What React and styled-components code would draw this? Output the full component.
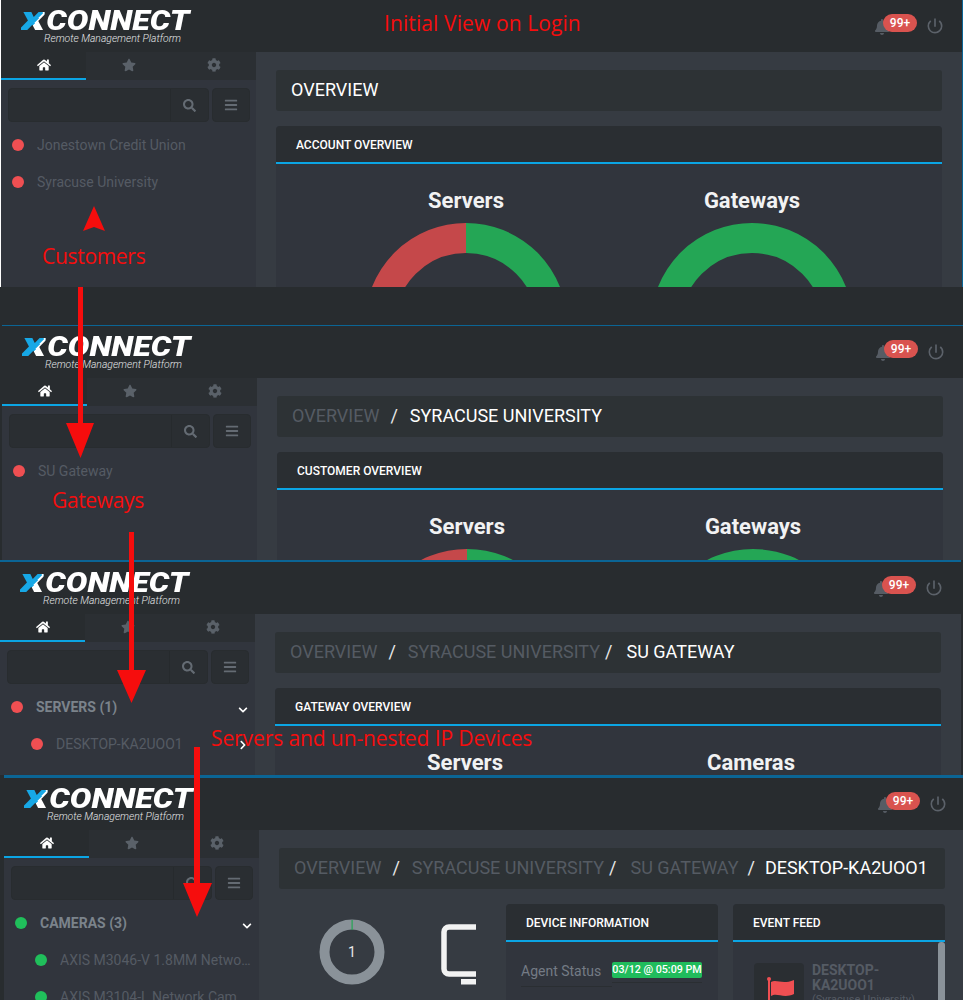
import React from "react";
import styled, { createGlobalStyle } from "styled-components";
import {
  FaHome,
  FaStar,
  FaCog,
  FaSearch,
  FaBars,
  FaBell,
  FaChevronDown,
  FaChevronRight,
} from "react-icons/fa";
import { MdPowerSettingsNew } from "react-icons/md";

const GlobalStyle = createGlobalStyle`
  html, body { margin: 0; padding: 0; background: #282c2f; }
  body { font-family: Roboto, "Liberation Sans", sans-serif; }
`;

const Page = styled.div`
  position: relative;
  width: 963px;
  height: 1000px;
  overflow: hidden;
  background: #282c2f;
`;

const Snapshot = styled.section`
  box-sizing: border-box;
  width: ${(p) => p.$width}px;
  height: ${(p) => p.$height}px;
  margin-left: ${(p) => p.$left}px;
  border-top: ${(p) => p.$line}px solid #0b6595;
  ${(p) => p.$framed && "border-left: 1px solid #fff; border-right: 1px solid #0b6595;"}
  overflow: hidden;
  display: flex;
  flex-direction: column;
  background: #363b42;
`;

const Band = styled.div`
  height: 38px;
  background: #282c2f;
`;

const Header = styled.header`
  flex: none;
  height: 52px;
  display: flex;
  align-items: center;
  justify-content: space-between;
  padding: 0 17px 0 20px;
  background: #282c2f;
`;

const Logo = styled.div`
  display: flex;
  flex-direction: column;
  align-items: flex-end;
  width: 168px;
  margin-top: -1px;
`;

const LogoMark = styled.div`
  font: italic 900 28px/24px Roboto, "Liberation Sans", sans-serif;
  color: #fff;
  white-space: nowrap;
`;

const LogoX = styled.span`
  display: inline-block;
  margin-right: 19px;
  font-size: 33px;
  transform: scaleX(1.5);
  transform-origin: right center;
  background: linear-gradient(118deg, #17a8e6 62%, #fff 62%);
  -webkit-background-clip: text;
  background-clip: text;
  color: transparent;
`;

const LogoWord = styled.span`
  display: inline-block;
  transform: scaleX(1.15);
  transform-origin: right center;
`;

const LogoSub = styled.div`
  margin: 0 8px 0 0;
  font: italic 300 10.4px/12px Roboto, "Liberation Sans", sans-serif;
  color: #e4e6e8;
  white-space: nowrap;
`;

const HeaderActions = styled.div`
  display: flex;
  align-items: center;
`;

const BellWrap = styled.div`
  position: relative;
  width: 44px;
  height: 20px;
  margin-right: 7px;
  color: #565c64;
  font-size: 16px;
  svg {
    position: absolute;
    left: 0;
    top: 3px;
  }
`;

const Badge = styled.span`
  position: absolute;
  left: 9px;
  top: -2px;
  width: 34px;
  height: 18px;
  border-radius: 9px;
  background: #d9534f;
  color: #fff;
  font: 500 12px/18px Roboto, sans-serif;
  text-align: center;
`;

const Power = styled(MdPowerSettingsNew)`
  color: #5c626a;
  font-size: 20px;
`;

const Body = styled.div`
  flex: 1;
  min-height: 0;
  display: flex;
`;

const Sidebar = styled.aside`
  flex: none;
  width: 255px;
  background: #31353d;
`;

const Tabs = styled.div`
  display: grid;
  grid-template-columns: repeat(3, 1fr);
  height: 28px;
  background: #2b2f33;
`;

const Tab = styled.div`
  box-sizing: border-box;
  display: flex;
  align-items: flex-start;
  justify-content: center;
  padding-top: 6px;
  font-size: 14px;
  color: ${(p) => (p.$active ? "#fff" : "#5a6169")};
  background: ${(p) => (p.$active ? "#282c2f" : "transparent")};
  border-bottom: 2px solid ${(p) => (p.$active ? "#0ba5e4" : "transparent")};
`;

const SearchRow = styled.div`
  display: flex;
  gap: 3px;
  padding: 8px 6px 4px 7px;
`;

const SearchBox = styled.div`
  flex: 1;
  height: 34px;
  box-sizing: border-box;
  display: flex;
  justify-content: flex-end;
  background: #2a2e32;
  border: 1px solid #282c2f;
  border-radius: 4px;
`;

const SearchButton = styled.div`
  width: 37px;
  display: flex;
  align-items: center;
  justify-content: center;
  border-left: 1px solid #262a2d;
  color: #646b73;
  font-size: 13px;
`;

const MenuButton = styled.div`
  width: 38px;
  height: 34px;
  box-sizing: border-box;
  display: flex;
  align-items: center;
  justify-content: center;
  background: #2a2e32;
  border: 1px solid #282c2f;
  border-radius: 4px;
  color: #646b73;
  font-size: 14px;
`;

const TreeRow = styled.div`
  display: flex;
  align-items: center;
  height: 37px;
  padding-left: ${(p) => (p.$nested ? 31 : 11)}px;
  padding-right: 7px;
`;

const Dot = styled.span`
  flex: none;
  width: 12px;
  height: 12px;
  margin-right: 13px;
  border-radius: 50%;
  background: ${(p) => (p.$ok ? "#20bf5b" : "#ef4f52")};
`;

const RowLabel = styled.span`
  flex: 1;
  min-width: 0;
  font-size: 14px;
  color: #555b64;
  white-space: nowrap;
  overflow: hidden;
  text-overflow: ellipsis;
`;

const GroupLabel = styled(RowLabel)`
  font-weight: 700;
  color: #7b838b;
`;

const RowChevron = styled.span`
  flex: none;
  margin-top: ${(p) => (p.$down ? 8 : 4)}px;
  color: #fff;
  font-size: 10px;
  line-height: 10px;
`;

const Main = styled.main`
  flex: 1;
  min-width: 0;
  padding: 18px 20px 0;
`;

const Crumbs = styled.nav`
  box-sizing: border-box;
  height: 41px;
  margin-bottom: 15px;
  display: flex;
  align-items: center;
  padding: 0 0 2px 15px;
  background: #2d3235;
  border-radius: 3px;
  font-size: 18px;
  white-space: nowrap;
`;

const CrumbLink = styled.span`
  color: #555b63;
`;

const CrumbSlash = styled.span`
  color: #e8e8e8;
  margin: 0 ${(p) => p.$after}px 0 ${(p) => p.$before}px;
`;

const CrumbCurrent = styled.span`
  color: #fff;
`;

const Panel = styled.div`
  background: #31353d;
  border-radius: 4px 4px 0 0;
`;

const PanelHead = styled.div`
  box-sizing: border-box;
  height: 38px;
  display: flex;
  align-items: center;
  padding: 1px 0 0 20px;
  background: #2a2e32;
  border-bottom: 2px solid #0ba5e4;
  border-radius: 4px 4px 0 0;
  color: #fff;
  font-size: 12px;
  font-weight: 500;
`;

const Charts = styled.div`
  display: grid;
  grid-template-columns: 286px 286px;
  padding: 25px 47px 0;
`;

const ChartCell = styled.div`
  display: flex;
  flex-direction: column;
  align-items: center;
`;

const ChartTitle = styled.h3`
  margin: 0 0 10px;
  font-size: 22px;
  line-height: 24px;
  font-weight: 700;
  color: #f1f2f3;
`;

const DeviceRow = styled.div`
  display: flex;
  align-items: flex-start;
  height: 240px;
  overflow: hidden;
`;

const StatColumn = styled.div`
  flex: none;
  width: 146px;
  padding-top: 15px;
  display: flex;
  justify-content: center;
`;

const Ring = styled.div`
  position: relative;
  width: 66px;
  height: 66px;
`;

const RingValue = styled.span`
  position: absolute;
  inset: 0;
  display: flex;
  align-items: center;
  justify-content: center;
  color: #e8e8e8;
  font-size: 14px;
`;

const DeviceIcon = styled.div`
  flex: none;
  width: 35px;
  margin: 20px 30px 0 16px;
  overflow: hidden;
  line-height: 0;
`;

const SidePanel = styled(Panel)`
  flex: none;
  width: 212px;
  min-height: 240px;
  margin-right: ${(p) => (p.$gap ? 15 : 0)}px;
`;

const InfoRow = styled.div`
  display: flex;
  padding: 20px 16px 0 15px;
`;

const InfoKey = styled.div`
  box-sizing: border-box;
  width: 91px;
  height: 25px;
  border-bottom: 1px solid #2a2e32;
  color: #747b85;
  font-size: 14px;
  line-height: 18px;
`;

const InfoValue = styled.div`
  flex: 1;
  box-sizing: border-box;
  height: 21px;
  border-bottom: 1px solid #2a2e32;
  span {
    display: block;
    height: 16px;
    background: #20bc5c;
    border-radius: 2px;
    color: #fff;
    font-size: 10.7px;
    font-weight: 500;
    line-height: 16px;
    text-align: center;
    white-space: nowrap;
  }
`;

const FeedBody = styled.div`
  position: relative;
  display: flex;
  padding: 21px 0 0 21px;
`;

const ScrollThumb = styled.div`
  position: absolute;
  top: 0;
  right: 0;
  width: 7px;
  height: 60px;
  border-radius: 3px 3px 0 0;
  background: #8a9299;
`;

const FeedTile = styled.div`
  flex: none;
  box-sizing: border-box;
  width: 50px;
  height: 60px;
  margin-right: 8px;
  padding: 14px 0 0 13px;
  background: #2a2e32;
  border-radius: 4px;
`;

const FeedText = styled.div`
  width: 115px;
`;

const FeedTitle = styled.div`
  color: #555b64;
  font-size: 14px;
  font-weight: 700;
  line-height: 15px;
`;

const FeedSub = styled.div`
  color: #555b64;
  font-size: 11px;
  line-height: 14px;
`;

const ArrowLayer = styled.svg`
  position: absolute;
  left: 0;
  top: 0;
  pointer-events: none;
`;

const Note = styled.div`
  position: absolute;
  left: ${(p) => p.$x}px;
  top: ${(p) => p.$y}px;
  color: #f60d0d;
  font: 21px/28px "Open Sans", "Noto Sans", sans-serif;
  letter-spacing: ${(p) => p.$spacing || 0}px;
  white-space: nowrap;
`;

function Donut({ left, right }) {
  return (
    <svg width="202" height="202" viewBox="0 0 202 202">
      <path d="M101 15 A86 86 0 0 0 101 187" fill="none" stroke={left} strokeWidth="30" />
      <path d="M101 15 A86 86 0 0 1 101 187" fill="none" stroke={right} strokeWidth="30" />
    </svg>
  );
}

function TopBar() {
  return (
    <Header>
      <Logo>
        <LogoMark>
          <LogoX>x</LogoX>
          <LogoWord>CONNECT</LogoWord>
        </LogoMark>
        <LogoSub>Remote Management Platform</LogoSub>
      </Logo>
      <HeaderActions>
        <BellWrap>
          <FaBell />
          <Badge>99+</Badge>
        </BellWrap>
        <Power />
      </HeaderActions>
    </Header>
  );
}

function SideNav({ children }) {
  return (
    <Sidebar>
      <Tabs>
        <Tab $active>
          <FaHome />
        </Tab>
        <Tab>
          <FaStar />
        </Tab>
        <Tab>
          <FaCog />
        </Tab>
      </Tabs>
      <SearchRow>
        <SearchBox>
          <SearchButton>
            <FaSearch />
          </SearchButton>
        </SearchBox>
        <MenuButton>
          <FaBars />
        </MenuButton>
      </SearchRow>
      {children}
    </Sidebar>
  );
}

function OverviewPanel({ title, first, second }) {
  return (
    <Panel>
      <PanelHead>{title}</PanelHead>
      <Charts>
        <ChartCell>
          <ChartTitle>{first}</ChartTitle>
          <Donut left="#c5484a" right="#24a655" />
        </ChartCell>
        <ChartCell>
          <ChartTitle>{second}</ChartTitle>
          <Donut left="#24a655" right="#24a655" />
        </ChartCell>
      </Charts>
    </Panel>
  );
}

export default function App() {
  return (
    <Page>
      <GlobalStyle />

      <Snapshot $left={0} $width={963} $height={287} $line={0} $framed>
        <TopBar />
        <Body>
          <SideNav>
            <TreeRow>
              <Dot />
              <RowLabel>Jonestown Credit Union</RowLabel>
            </TreeRow>
            <TreeRow>
              <Dot />
              <RowLabel>Syracuse University</RowLabel>
            </TreeRow>
          </SideNav>
          <Main>
            <Crumbs>
              <CrumbCurrent>OVERVIEW</CrumbCurrent>
            </Crumbs>
            <OverviewPanel title="ACCOUNT OVERVIEW" first="Servers" second="Gateways" />
          </Main>
        </Body>
      </Snapshot>
      <Band />

      <Snapshot $left={2} $width={961} $height={235} $line={1}>
        <TopBar />
        <Body>
          <SideNav>
            <TreeRow>
              <Dot />
              <RowLabel>SU Gateway</RowLabel>
            </TreeRow>
          </SideNav>
          <Main>
            <Crumbs>
              <CrumbLink>OVERVIEW</CrumbLink>
              <CrumbSlash $before={11} $after={12}>/</CrumbSlash>
              <CrumbCurrent>SYRACUSE UNIVERSITY</CrumbCurrent>
            </Crumbs>
            <OverviewPanel title="CUSTOMER OVERVIEW" first="Servers" second="Gateways" />
          </Main>
        </Body>
      </Snapshot>

      <Snapshot $left={0} $width={961} $height={215} $line={2}>
        <TopBar />
        <Body>
          <SideNav>
            <TreeRow>
              <Dot />
              <GroupLabel>SERVERS (1)</GroupLabel>
              <RowChevron $down>
                <FaChevronDown />
              </RowChevron>
            </TreeRow>
            <TreeRow $nested>
              <Dot />
              <RowLabel>DESKTOP-KA2UOO1</RowLabel>
              <RowChevron>
                <FaChevronRight />
              </RowChevron>
            </TreeRow>
          </SideNav>
          <Main>
            <Crumbs>
              <CrumbLink>OVERVIEW</CrumbLink>
              <CrumbSlash $before={11} $after={12}>/</CrumbSlash>
              <CrumbLink>SYRACUSE UNIVERSITY</CrumbLink>
              <CrumbSlash $before={5} $after={14}>/</CrumbSlash>
              <CrumbCurrent>SU GATEWAY</CrumbCurrent>
            </Crumbs>
            <OverviewPanel title="GATEWAY OVERVIEW" first="Servers" second="Cameras" />
          </Main>
        </Body>
      </Snapshot>

      <Snapshot $left={4} $width={961} $height={225} $line={3}>
        <TopBar />
        <Body>
          <SideNav>
            <TreeRow>
              <Dot $ok />
              <GroupLabel>CAMERAS (3)</GroupLabel>
              <RowChevron $down>
                <FaChevronDown />
              </RowChevron>
            </TreeRow>
            <TreeRow $nested>
              <Dot $ok />
              <RowLabel>AXIS M3046-V 1.8MM Network Camera</RowLabel>
            </TreeRow>
            <TreeRow $nested>
              <Dot $ok />
              <RowLabel>AXIS M3104-L Network Cam</RowLabel>
            </TreeRow>
          </SideNav>
          <Main>
            <Crumbs>
              <CrumbLink>OVERVIEW</CrumbLink>
              <CrumbSlash $before={11} $after={12}>/</CrumbSlash>
              <CrumbLink>SYRACUSE UNIVERSITY</CrumbLink>
              <CrumbSlash $before={5} $after={14}>/</CrumbSlash>
              <CrumbLink>SU GATEWAY</CrumbLink>
              <CrumbSlash $before={9} $after={10}>/</CrumbSlash>
              <CrumbCurrent>DESKTOP-KA2UOO1</CrumbCurrent>
            </Crumbs>
            <DeviceRow>
              <StatColumn>
                <Ring>
                  <svg width="66" height="66" viewBox="0 0 66 66">
                    <circle cx="33" cy="33" r="27.5" fill="none" stroke="#8a9299" strokeWidth="10" />
                    <rect x="32.5" y="1" width="1.2" height="10" fill="#24a655" />
                  </svg>
                  <RingValue>1</RingValue>
                </Ring>
              </StatColumn>
              <DeviceIcon>
                <svg width="35" height="62" viewBox="0 0 35 62">
                  <rect x="3" y="3" width="60" height="47" rx="5" fill="none" stroke="#f2f2f2" strokeWidth="5.5" />
                  <rect x="20" y="55" width="30" height="5.5" fill="#f2f2f2" />
                </svg>
              </DeviceIcon>
              <SidePanel $gap>
                <PanelHead>DEVICE INFORMATION</PanelHead>
                <InfoRow>
                  <InfoKey>Agent Status</InfoKey>
                  <InfoValue>
                    <span>03/12 @ 05:09 PM</span>
                  </InfoValue>
                </InfoRow>
              </SidePanel>
              <SidePanel>
                <PanelHead>EVENT FEED</PanelHead>
                <FeedBody>
                  <ScrollThumb />
                  <FeedTile>
                    <svg width="28" height="34" viewBox="0 0 28 34">
                      <circle cx="2" cy="2" r="2" fill="#ef4f52" />
                      <rect x="1" y="2" width="2" height="32" fill="#ef4f52" />
                      <path d="M4 5 C10 2 15 8 27 3 V17 C16 22 10 15 4 19 Z" fill="#ef4f52" />
                    </svg>
                  </FeedTile>
                  <FeedText>
                    <FeedTitle>DESKTOP-KA2UOO1</FeedTitle>
                    <FeedSub>(Syracuse University)</FeedSub>
                  </FeedText>
                </FeedBody>
              </SidePanel>
            </DeviceRow>
          </Main>
        </Body>
      </Snapshot>

      <ArrowLayer width="963" height="1000" viewBox="0 0 963 1000">
        <path d="M94 206 L105 231 L94 227 L83 231 Z" fill="#f60d0d" />
        <path d="M78 287 H83 V423 H94 L80.5 458 L66 423 H78 Z" fill="#f60d0d" />
        <path d="M129 532 H134 V670 H146 L131.5 703 L117 670 H129 Z" fill="#f60d0d" />
        <path d="M194 747 H200 V883 H212 L197 917 L183 883 H194 Z" fill="#f60d0d" />
      </ArrowLayer>
      <Note $x={384} $y={9} $spacing={0.1}>Initial View on Login</Note>
      <Note $x={42} $y={242} $spacing={-0.3}>Customers</Note>
      <Note $x={52} $y={486} $spacing={-0.35}>Gateways</Note>
      <Note $x={211} $y={724} $spacing={-0.1}>Servers and un-nested IP Devices</Note>
    </Page>
  );
}
